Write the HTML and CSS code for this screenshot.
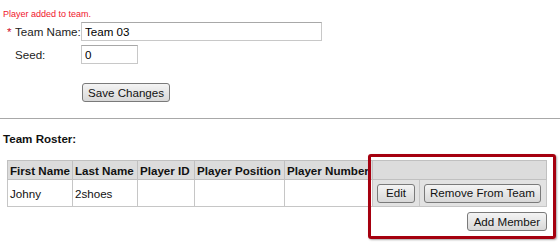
FILE: index.html
```html
<!DOCTYPE html>
<html>
<head>
<meta charset="utf-8">
<link rel="stylesheet" href="styles.css">
</head>
<body>
<div class="page">
  <div class="msg">Player added to team.</div>
  <div class="form">
    <div class="row">
      <label class="lbl"><span class="req">*</span>Team Name:</label>
      <input class="inp wide" type="text" value="Team 03">
    </div>
    <div class="row">
      <label class="lbl">Seed:</label>
      <input class="inp narrow" type="text" value="0">
    </div>
    <div class="row btnrow">
      <span class="lbl"></span>
      <button class="btn">Save Changes</button>
    </div>
  </div>
  <hr class="sep">
  <div class="heading">Team Roster:</div>
  <div class="roster">
    <table class="grid">
      <colgroup>
        <col style="width:65px"><col style="width:65px"><col style="width:57px"><col style="width:90px"><col style="width:88px"><col style="width:47px"><col style="width:127px">
      </colgroup>
      <thead>
        <tr>
          <th>First Name</th><th>Last Name</th><th>Player ID</th><th>Player Position</th><th>Player Number</th><th colspan="2" class="act"></th>
        </tr>
      </thead>
      <tbody>
        <tr>
          <td>Johny</td><td>2shoes</td><td></td><td></td><td></td>
          <td class="act"><button class="btn edit">Edit</button></td>
          <td class="act"><button class="btn">Remove From Team</button></td>
        </tr>
      </tbody>
    </table>
    <div class="addrow"><button class="btn">Add Member</button></div>
  </div>
  <div class="highlight"></div>
</div>
</body>
</html>
```
FILE: styles.css
```css
html, body { margin: 0; padding: 0; background: #fff; }
body { font-family: "Liberation Sans", Arial, sans-serif; font-size: 11.6px; color: #111; }
.page { position: relative; width: 560px; height: 242px; overflow: hidden; }
.msg { color: #f0142d; font-size: 9px; padding: 9px 0 0 3px; line-height: 11px; height: 13px; }
.form { display: flex; flex-direction: column; }
.row { display: flex; align-items: center; height: 19px; margin-bottom: 4px; }
.lbl { box-sizing: border-box; width: 81px; flex: none; padding-left: 15px; position: relative; color: #222; font-size: 11.6px; white-space: nowrap; }
.req { color: #d0102a; position: absolute; left: 7px; top: 0; }
.inp { box-sizing: border-box; height: 19px; border: 1px solid #c8c8c8; border-top-color: #a8a8a8; padding: 0 3px; font-family: "Liberation Sans", Arial, sans-serif; font-size: 11.6px; color: #000; margin: 0; }
.wide { width: 241px; }
.narrow { width: 57px; }
.btnrow { margin-top: 15px; }
.btnrow .btn { margin-left: 1px; }
.btn { box-sizing: border-box; height: 19px; padding: 0 5px; font-family: "Liberation Sans", Arial, sans-serif; font-size: 11.6px; color: #111; border: 1px solid #7a7a7a; border-radius: 3px; background: linear-gradient(#f4f4f4, #e6e6e6 50%, #d8d8d8); margin: 0; line-height: 16px; }
.sep { border: 0; border-top: 1px solid #a8a8a8; margin: 12px 0 0 0; height: 0; }
.heading { font-weight: bold; padding: 13px 0 0 3px; height: 28px; line-height: 14px; }
.roster { margin-left: 7px; width: 539px; }
.grid { border-collapse: collapse; table-layout: fixed; width: 539px; }
.grid th, .grid td { border: 1px solid #c6c6c6; padding: 0 2px; text-align: left; white-space: nowrap; overflow: hidden; }
.grid th { background: #dcdcdc; font-weight: bold; height: 18px; border-color: #c0c0c0; }
.grid td { height: 26px; background: #fff; }
.grid td.act { background: #e2e2e2; padding: 0 3px; }
.grid td.act .btn { margin-left: 1px; }
.grid td.act .edit { padding: 0 8px; }
.addrow { display: flex; justify-content: flex-end; padding-top: 5px; margin-right: -1px; }
.addrow .btn { padding: 0 6px; }
.highlight { position: absolute; left: 368px; top: 154px; width: 182px; height: 79px; border: 3px solid #a5000f; border-radius: 3px; box-shadow: 1px 1px 2px rgba(0,0,0,0.35); }
```
